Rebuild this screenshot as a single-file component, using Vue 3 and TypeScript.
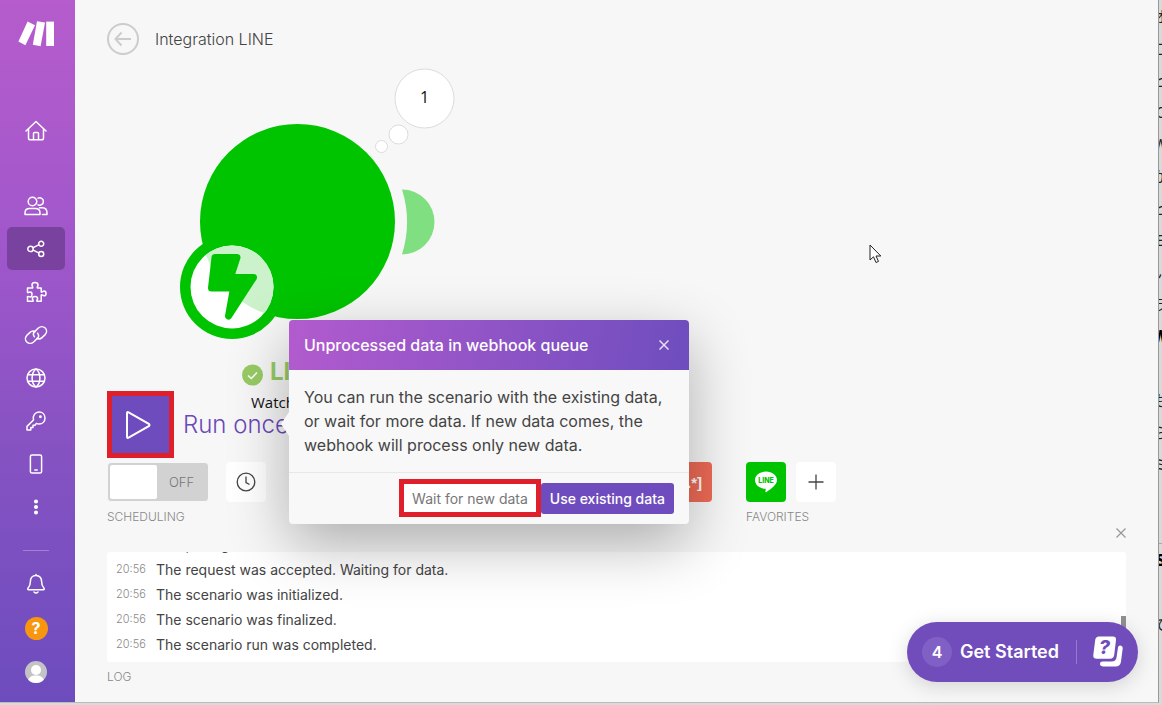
<script setup lang="ts">
import { ref } from 'vue'

interface NavItem {
  id: string
  label: string
  paths: string[]
}

interface LogEntry {
  time: string
  text: string
}

const home: NavItem = {
  id: 'home',
  label: 'Home',
  paths: [
    'M2 12 L12 2.5 L22 12',
    'M4.5 10 V19 Q4.5 20.8 6.3 20.8 H17.7 Q19.5 20.8 19.5 19 V10',
    'M9.5 20.5 V14.5 Q9.5 13.5 10.5 13.5 H13.5 Q14.5 13.5 14.5 14.5 V20.5',
  ],
}

const navItems: NavItem[] = [
  {
    id: 'team',
    label: 'Team',
    paths: [
      'M8.5 3.2 a4.3 4.3 0 1 1 0 8.6 a4.3 4.3 0 1 1 0 -8.6 Z',
      'M14 4.2 A3.7 3.7 0 1 1 14 10.8',
      'M1 20.5 V19 Q1 14.5 5.5 14.5 H11.5 Q16 14.5 16 19 V20.5 Z',
      'M15.5 13.8 H18.5 Q23 14 23 19 V20.5 H18.5',
    ],
  },
  {
    id: 'scenarios',
    label: 'Scenarios',
    paths: [
      'M6.5 9.2 a2.7 2.7 0 1 1 0 5.4 a2.7 2.7 0 1 1 0 -5.4 Z',
      'M17.2 4.3 a2.5 2.5 0 1 1 0 5 a2.5 2.5 0 1 1 0 -5 Z',
      'M17.2 14.6 a2.5 2.5 0 1 1 0 5 a2.5 2.5 0 1 1 0 -5 Z',
      'M9.2 10.7 L14.7 7.9 M9.2 13.2 L14.7 15.9',
    ],
  },
  {
    id: 'templates',
    label: 'Templates',
    paths: [
      'M3.5 8 H8.6 C9.4 7.2 8 6.4 8 5 C8 3.4 9.4 2.6 11 2.6 C12.6 2.6 14 3.4 14 5 C14 6.4 12.6 7.2 13.4 8 H17.2 V12 C18 12.8 18.6 11 20 11 C21.5 11 22 12.2 22 13.4 C22 14.6 21.5 15.8 20 15.8 C18.6 15.8 18 14.2 17.2 15 V21.2 H13 C12.2 20.4 13.6 19.8 13.6 18.4 C13.6 17.2 12.4 16.4 11 16.4 C9.6 16.4 8.4 17.2 8.4 18.4 C8.4 19.8 9.8 20.4 9 21.2 H3.5 V16.6 C4.3 15.8 5 17.2 6.4 17 C7.6 16.8 8 15.6 8 14.4 C8 13.2 7.4 12 6.2 12 C4.8 12 4.3 13.2 3.5 12.4 Z',
    ],
  },
  {
    id: 'connections',
    label: 'Connections',
    paths: [
      'M13.6 10.2 C15 12 14.8 14 13.4 15.4 L9.6 19 C7.6 20.8 4.6 20.8 2.8 19 C1 17.2 1 14.4 2.8 12.4 L6 9.4 C7.6 8 9.6 7.8 11 8.6',
      'M10.4 13.8 C9 12 9.2 10 10.6 8.6 L14.4 5 C16.4 3.2 19.4 3.2 21.2 5 C23 6.8 23 9.6 21.2 11.6 L18 14.6 C16.4 16 14.4 16.2 13 15.4',
    ],
  },
  {
    id: 'webhooks',
    label: 'Webhooks',
    paths: [
      'M12 3 a9 9 0 1 1 0 18 a9 9 0 1 1 0 -18 Z',
      'M12 3 C6.8 7 6.8 17 12 21 C17.2 17 17.2 7 12 3 Z',
      'M4 8.8 H20 M4 15.2 H20',
    ],
  },
  {
    id: 'keys',
    label: 'Keys',
    paths: [
      'M15 3 C18.6 3 21 5.6 21 9 C21 12.4 18.6 15 15 15 C14 15 13.2 14.8 12.4 14.4 L11 16.2 H9 V18.6 H6.8 V21 H3 V17.4 L9.5 11 C8.2 6.6 11.4 3 15 3 Z',
      'M16.4 7 a0.7 0.7 0 1 1 0 1.4 a0.7 0.7 0 1 1 0 -1.4 Z',
    ],
  },
  {
    id: 'devices',
    label: 'Devices',
    paths: ['M8 3 H16 Q17.6 3 17.6 4.6 V19.4 Q17.6 21 16 21 H8 Q6.4 21 6.4 19.4 V4.6 Q6.4 3 8 3 Z', 'M10.8 18 H13.2'],
  },
  {
    id: 'more',
    label: 'More',
    paths: [
      'M12 5.2 a1.3 1.3 0 1 1 0 2.6 a1.3 1.3 0 1 1 0 -2.6 Z M12 10.7 a1.3 1.3 0 1 1 0 2.6 a1.3 1.3 0 1 1 0 -2.6 Z M12 16.2 a1.3 1.3 0 1 1 0 2.6 a1.3 1.3 0 1 1 0 -2.6 Z',
    ],
  },
]

const log: LogEntry[] = [
  { time: '20:56', text: 'The polling.' },
  { time: '20:56', text: 'The request was accepted. Waiting for data.' },
  { time: '20:56', text: 'The scenario was initialized.' },
  { time: '20:56', text: 'The scenario was finalized.' },
  { time: '20:56', text: 'The scenario run was completed.' },
]

const activeId = ref('scenarios')
const scheduled = ref(false)
</script>

<template>
  <div class="desktop">
    <div class="window">
      <nav class="sidebar" aria-label="Main">
        <a class="logo" href="#" aria-label="Make">
          <svg width="36" height="26" viewBox="0 0 36 26">
            <path d="M9.6 0.6 L17 4.2 L7.4 24.2 L0.4 20.6 Z" />
            <path d="M19 0.2 L27 1.6 L22.6 25.2 L14.8 23.8 Z" />
            <path d="M28.2 0.6 H36 V25 H28.2 Z" />
          </svg>
        </a>
        <a class="item first" href="#" :aria-label="home.label">
          <svg class="icon" viewBox="0 0 24 24"><path v-for="p in home.paths" :key="p" :d="p" /></svg>
        </a>
        <a
          v-for="item in navItems"
          :key="item.id"
          class="item"
          :class="{ active: item.id === activeId, solid: item.id === 'more' }"
          href="#"
          :aria-label="item.label"
          @click.prevent="activeId = item.id"
        >
          <svg class="icon" viewBox="0 0 24 24"><path v-for="p in item.paths" :key="p" :d="p" /></svg>
        </a>
        <hr class="rule" />
        <a class="item account" href="#" aria-label="Notifications">
          <svg class="icon" viewBox="0 0 24 24">
            <path d="M12 3.4 C8.2 3.4 6.4 6.4 6.4 9.4 C6.4 13.6 5.4 14.6 4 16.2 C3.4 17 3.8 17.8 4.6 17.8 H19.4 C20.2 17.8 20.6 17 20 16.2 C18.6 14.6 17.6 13.6 17.6 9.4 C17.6 6.4 15.8 3.4 12 3.4 Z M12 3.4 V2.4 M10 20 Q12 22 14 20" />
          </svg>
        </a>
        <a class="item account" href="#" aria-label="Help"><span class="help">?</span></a>
        <a class="item account" href="#" aria-label="Profile">
          <svg width="22" height="22" viewBox="0 0 22 22">
            <clipPath id="face"><circle cx="11" cy="11" r="11" /></clipPath>
            <g clip-path="url(#face)">
              <rect width="22" height="22" fill="#c3c3c6" />
              <circle cx="11" cy="9" r="5" fill="#fff" />
              <path d="M2.5 22 C3 16 6.5 14.5 11 14.5 C15.5 14.5 19 16 19.5 22 Z" fill="#fff" />
            </g>
          </svg>
        </a>
      </nav>

      <main class="main">
        <header class="header">
          <button class="back" type="button" aria-label="Back">
            <svg width="32" height="32" viewBox="0 0 32 32">
              <circle cx="16" cy="16" r="15" />
              <path d="M24 16 H8.5 M14.5 9.5 L8.5 16 L14.5 22.5" />
            </svg>
          </button>
          <h1 class="title">Integration LINE</h1>
        </header>

        <svg class="diagram" width="500" height="420" viewBox="75 0 500 420">
          <clipPath id="badge"><circle cx="232" cy="287" r="41.5" /></clipPath>
          <circle cx="297.5" cy="221.5" r="97.5" fill="#00c400" />
          <circle cx="232" cy="287" r="52" fill="#00c400" />
          <circle cx="232" cy="287" r="41.5" fill="#fff" />
          <circle cx="297.5" cy="221.5" r="97.5" fill="#ccf2cc" clip-path="url(#badge)" />
          <path
            d="M215 257.5 H237 L230.5 277.5 H253.5 L228.5 316 L233.5 288 H211.5 Z"
            fill="#00c400" stroke="#00c400" stroke-width="7" stroke-linejoin="round"
          />
          <path d="M402 189.5 A32.5 32.5 0 0 1 402 254.5 A109 109 0 0 0 402 189.5 Z" fill="#80df80" />
          <g fill="#fff" stroke="#dcdcdc">
            <circle cx="424.5" cy="98.5" r="29.5" />
            <circle cx="398.5" cy="134.5" r="9.5" />
            <circle cx="381.5" cy="146.5" r="6" />
          </g>
          <text class="count" x="424.5" y="103" text-anchor="middle">1</text>
          <circle cx="252.5" cy="375" r="10.5" fill="#97cb64" />
          <path d="M248 375.5 L251.3 378.5 L257 372.5" fill="none" stroke="#fff" stroke-width="1.5" />
          <text class="module-name" x="270" y="380">LINE</text>
          <text class="module-action" x="251" y="408">Watch</text>
        </svg>

        <section class="dock">
          <div class="run">
            <button id="run" class="play" type="button" aria-label="Run once">
              <svg width="30" height="32" viewBox="3 0 30 32">
                <path d="M4 4.2 Q4 2.5 5.6 3.3 L25.8 14.8 Q27.2 16 25.8 17.2 L5.6 28.7 Q4 29.5 4 27.8 Z" />
              </svg>
            </button>
            <label class="run-label" for="run">Run once</label>
          </div>

          <div class="tools">
            <div class="group">
              <div class="tiles">
                <label class="switch">
                  <input v-model="scheduled" type="checkbox" aria-label="Scheduling" />
                  <span class="knob"></span>
                  <span class="state">{{ scheduled ? 'ON' : 'OFF' }}</span>
                </label>
                <button class="tile clock" type="button" aria-label="Schedule setting">
                  <svg width="20" height="20" viewBox="0 0 20 20"><circle cx="10" cy="10" r="8.8" /><path d="M10 4.5 V10.5 L13.5 12.5" /></svg>
                </button>
              </div>
              <span class="caption">SCHEDULING</span>
            </div>
            <div class="group end">
              <button class="tile parser" type="button">[.*]</button>
            </div>
            <div class="group">
              <div class="tiles near">
                <button class="tile line" type="button" aria-label="LINE">
                  <svg width="24" height="24" viewBox="0 0 24 24">
                    <path d="M12 1.5 C18 1.5 23 5.2 23 10 C23 14.5 18 18.3 12.5 22 C11.5 22.6 11.3 22 11.5 21 L11.7 18.8 C5.5 18.5 1 14.8 1 10 C1 5.2 6 1.5 12 1.5 Z" fill="#fff" />
                    <text x="12" y="12.5" text-anchor="middle">LINE</text>
                  </svg>
                </button>
                <button class="tile" type="button" aria-label="Add favorite">
                  <svg width="16" height="16" viewBox="0 0 16 16"><path d="M8 0.5 V15.5 M0.5 8 H15.5" /></svg>
                </button>
              </div>
              <span class="caption">FAVORITES</span>
            </div>
          </div>

          <button class="log-close" type="button" aria-label="Close log">
            <svg width="10" height="10" viewBox="0 0 10 10"><path d="M0.5 0.5 L9.5 9.5 M9.5 0.5 L0.5 9.5" /></svg>
          </button>
          <div class="log">
            <div v-for="(entry, i) in log" :key="i" class="entry">
              <time class="time">{{ entry.time }}</time>
              <span>{{ entry.text }}</span>
            </div>
            <span class="thumb"></span>
          </div>
          <span class="caption">LOG</span>
        </section>

        <div class="dialog" role="dialog" aria-labelledby="dialog-title">
          <div class="dialog-head">
            <h2 id="dialog-title">Unprocessed data in webhook queue</h2>
            <button type="button" aria-label="Close">
              <svg width="10" height="10" viewBox="0 0 10 10"><path d="M0.5 0.5 L9.5 9.5 M9.5 0.5 L0.5 9.5" /></svg>
            </button>
          </div>
          <p class="dialog-body">
            You can run the scenario with the existing data, or wait for more data. If new data comes, the webhook will process only new data.
          </p>
          <div class="dialog-foot">
            <button class="wait" type="button">Wait for new data</button>
            <button class="use" type="button">Use existing data</button>
          </div>
        </div>

        <button class="started" type="button">
          <span class="badge">4</span>
          <span class="started-text">Get Started</span>
          <svg class="cards" width="30" height="32" viewBox="0 0 30 32">
            <path d="M27 9.5 C28.5 9.5 30 10.5 29.7 12.5 L28 25.5 Q27.3 30.5 22.5 30.5 H10.5 Q7 30.5 7 27.8 Q7 25.6 9.5 25.6 H18.5 Q23 25.6 23.6 21 L25 11.5 Q25.3 9.5 27 9.5 Z" fill="#fff" />
            <path d="M6 0.5 H20 Q23.4 0.5 23 4 L21.2 19 Q20.7 22.7 17 22.7 H3.5 Q-0.2 22.7 0.3 19 L2.2 4 Q2.7 0.5 6 0.5 Z" fill="#fff" />
            <text x="11.5" y="18" text-anchor="middle">?</text>
          </svg>
        </button>

        <svg class="cursor" width="14" height="20" viewBox="0 0 14 20">
          <path d="M1 1 V16 L4.5 12.8 L7 18.5 L9.5 17.4 L7 12 H11.8 Z" />
        </svg>
      </main>
    </div>

    <aside class="behind" aria-hidden="true">
      <span>オ</span><span>こ</span><span>ビ</span><span>C</span><span>W</span><span>が</span><span>ビ</span><span>E</span><span>い</span><span>ラ</span><b>W</b><span></span><span>も</span><span>ら</span><span>ミ</span><span></span><span class="divided"></span><b>S</b><span></span><span>で</span><span></span><span></span>
    </aside>
  </div>
</template>

<style>
body {
  margin: 0;
  background: #dadada;
}
</style>

<style scoped>
.desktop {
  display: flex;
  height: 100vh;
  overflow: hidden;
  font-family: Inter, "Liberation Sans", sans-serif;
  font-weight: 300;
  color: #444;
}

button {
  font: inherit;
  border: 0;
  padding: 0;
  background: none;
  color: inherit;
}

svg {
  display: block;
  flex: none;
}

.window {
  flex: 1;
  display: flex;
  margin-bottom: 2px;
  border-right: 1px solid #999;
  border-bottom: 1px solid #bbb;
}

.behind {
  width: 3px;
  display: flex;
  flex-direction: column;
  background: #d9d9d9;
  overflow: hidden;
  color: #222;
  font: 15px/32px "Noto Sans CJK JP", sans-serif;
}

.behind span,
.behind b {
  display: flex;
  justify-content: center;
  height: 32px;
  overflow: hidden;
}

.behind .divided {
  box-sizing: border-box;
  border-bottom: 1px solid #aaa;
}

.behind b {
  font-weight: 900;
  color: #000;
}

.sidebar {
  width: 58px;
  display: flex;
  flex-direction: column;
  padding: 21px 10px 0 7px;
  background: linear-gradient(#b65ccc, #a057cb 35%, #8552c2 65%, #6d4cbe);
}

.logo {
  display: flex;
  justify-content: center;
  height: 27px;
}

.logo svg {
  fill: #fff;
}

.item {
  display: flex;
  align-items: center;
  justify-content: center;
  height: 43px;
  border-radius: 5px;
  text-decoration: none;
}

.item.first {
  margin: 61px 0 32px;
}

.item.account {
  height: 44px;
}

.item.active {
  background: #7a429f;
}

.icon {
  width: 24px;
  height: 24px;
  fill: none;
  stroke: #fff;
  stroke-width: 1.5;
  stroke-linejoin: round;
  stroke-linecap: round;
}

.item.solid .icon {
  fill: #fff;
}

.rule {
  width: 26px;
  height: 1px;
  margin: 22px auto 11px;
  border: 0;
  background: #a27fd3;
}

.help {
  width: 23px;
  height: 23px;
  border-radius: 50%;
  background: #f8960f;
  color: #fff;
  font-size: 16px;
  font-weight: 700;
  line-height: 23px;
  text-align: center;
}

.main {
  position: relative;
  flex: 1;
  display: flex;
  flex-direction: column;
  justify-content: space-between;
  background: #f7f7f7;
}

.header {
  display: flex;
  align-items: center;
  gap: 16px;
  padding: 22px 32px;
}

.back svg {
  fill: none;
  stroke: #ccc;
  stroke-width: 2;
}

.title {
  margin: 0;
  font-size: 16px;
  line-height: 34px;
  font-weight: 300;
  color: #444;
}

.header .back {
  height: 32px;
}

.diagram {
  position: absolute;
  left: 0;
  top: 0;
}

.count,
.module-action {
  font-family: "Open Sans", "Noto Sans", sans-serif;
  font-size: 15px;
  font-weight: 400;
  fill: #111;
}

.count {
  font-size: 16px;
}

.module-name {
  font-size: 24px;
  font-weight: 700;
  fill: #97cb64;
}

.dock {
  position: relative;
  display: flex;
  flex-direction: column;
  padding: 0 32px 16px;
}

.run {
  display: flex;
  align-items: center;
  gap: 9px;
}

.play {
  display: flex;
  align-items: center;
  justify-content: center;
  width: 67px;
  height: 67px;
  border: 5px solid #df202b;
  background: #6f4cbd;
}

.play svg {
  fill: none;
  stroke: #fff;
  stroke-width: 2;
}

.run-label {
  font-size: 24px;
  color: #6a48b8;
}

.tools {
  display: flex;
  gap: 34px;
  margin-top: 4px;
}

.group {
  display: flex;
  flex-direction: column;
  gap: 6px;
}

.group.end {
  margin-left: 372px;
}

.tiles {
  display: flex;
  gap: 17px;
}

.tiles.near {
  gap: 10px;
}

.caption {
  font-size: 12px;
  line-height: 18px;
  color: #888;
}

.tile {
  display: flex;
  align-items: center;
  justify-content: center;
  width: 40px;
  height: 40px;
  border-radius: 4px;
  background: #fff;
}

.tile svg {
  fill: none;
  stroke: #444;
  stroke-width: 1.3;
}

.tile.parser {
  background: #ee6b56;
  color: #fff;
  font-family: "Liberation Sans", sans-serif;
  font-size: 15px;
  font-weight: 700;
}

.tile.line {
  background: #00c300;
}

.tile.line svg {
  stroke: none;
}

.tile.line text {
  font-size: 7px;
  font-weight: 800;
  fill: #00c300;
}

.switch {
  position: relative;
  display: flex;
  align-items: center;
  width: 102px;
  height: 40px;
  box-sizing: border-box;
  padding: 2px;
  border: 1px solid #f7f7f7;
  border-radius: 4px;
  background: #d2d2d2;
}

.switch input {
  position: absolute;
  inset: 0;
  margin: 0;
  opacity: 0;
}

.knob {
  width: 47px;
  height: 34px;
  border-radius: 2px;
  background: #fff;
}

.state {
  flex: 1;
  text-align: center;
  font-size: 13px;
  color: #777;
}

.log-close {
  align-self: flex-end;
  display: flex;
  padding: 2px 0;
}

.log-close svg {
  stroke: #999;
  stroke-width: 1.3;
}

.log {
  position: relative;
  display: flex;
  flex-direction: column;
  justify-content: flex-end;
  height: 105px;
  margin: 12px 0 6px;
  padding-bottom: 5px;
  background: #fff;
  border-radius: 3px;
  overflow: hidden;
}

.entry {
  flex: none;
  display: flex;
  gap: 10px;
  padding-left: 9px;
  font-size: 14px;
  font-weight: 400;
  line-height: 25px;
}

.time {
  width: 30px;
  font-size: 11px;
  font-weight: 300;
  color: #888;
}

.thumb {
  position: absolute;
  right: 0;
  bottom: 0;
  width: 5px;
  height: 46px;
  background: #909090;
}

.dialog {
  position: absolute;
  left: 214px;
  top: 320px;
  width: 400px;
  border-radius: 4px;
  background: #f8f8f8;
  box-shadow: 0 20px 60px rgba(0, 0, 0, 0.3);
}

.dialog::before {
  content: "";
  position: absolute;
  left: -8px;
  top: 92px;
  border: solid transparent;
  border-width: 12px 8px 12px 0;
  border-right-color: #f8f8f8;
}

.dialog-head {
  display: flex;
  align-items: center;
  justify-content: space-between;
  height: 50px;
  padding: 0 20px 0 15px;
  border-radius: 4px 4px 0 0;
  background: linear-gradient(100deg, #b25bce, #6e4dbe);
  color: #fff;
}

.dialog-head h2 {
  margin: 0;
  font-size: 16px;
  font-weight: 500;
}

.dialog-head svg {
  stroke: #eadcf5;
  stroke-width: 1.5;
}

.dialog-body {
  margin: 0;
  padding: 15px 15px;
  font-size: 16px;
  font-weight: 400;
  line-height: 24px;
}

.dialog-foot {
  display: flex;
  align-items: center;
  justify-content: flex-end;
  padding: 6px 15px 7px;
  border-top: 1px solid #e8e8e8;
  font-size: 14px;
}

.wait {
  height: 38px;
  padding: 0 8px;
  border: 5px solid #df202b;
  background: #fff;
  color: #777;
  font-weight: 400;
}

.use {
  height: 31px;
  padding: 0 9px;
  border-radius: 3px;
  background: #6f4cbd;
  color: #fff;
  font-weight: 500;
}

.started {
  position: absolute;
  right: 20px;
  bottom: 20px;
  display: flex;
  align-items: center;
  height: 60px;
  padding: 0 15px;
  border-radius: 30px;
  background: #714dbb;
  color: #fff;
  font-size: 18px;
  font-weight: 600;
  box-shadow: 0 4px 20px rgba(0, 0, 0, 0.15);
}

.badge {
  width: 30px;
  margin-right: 8px;
  border-radius: 50%;
  background: #8160c5;
  font-size: 16px;
  line-height: 30px;
}

.started-text {
  padding-right: 17px;
  border-right: 1px solid #9479cd;
  line-height: 24px;
}

.cards {
  margin-left: 16px;
}

.cards text {
  font-size: 19px;
  font-weight: 800;
  font-style: italic;
  fill: #714dbb;
}

.cursor {
  position: absolute;
  left: 794px;
  top: 244px;
  fill: #fff;
  stroke: #222;
}
</style>
